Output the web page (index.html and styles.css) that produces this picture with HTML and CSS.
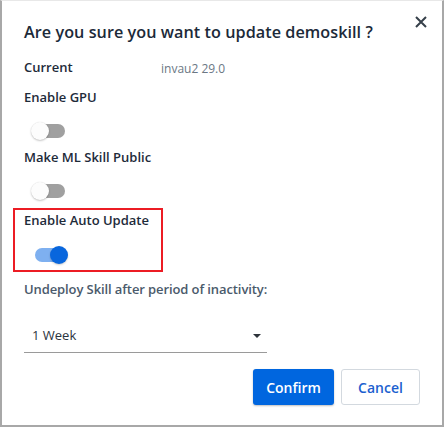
FILE: index.html
```html
<!DOCTYPE html>
<html lang="en">
<head>
<meta charset="utf-8">
<title>Update skill</title>
<link rel="stylesheet" href="styles.css">
</head>
<body>
<div class="dialog">
  <button class="close" aria-label="Close">
    <svg width="12" height="12" viewBox="0 0 12 12"><path d="M1 1L11 11M11 1L1 11" stroke="#36404a" stroke-width="2" fill="none"/></svg>
  </button>
  <h1 class="title">Are you sure you want to update demoskill ?</h1>
  <div class="current">
    <span class="label current-label">Current</span>
    <span class="value">invau2 29.0</span>
  </div>
  <div class="label gap-label">Enable GPU</div>
  <div class="switch-row"><span class="switch"><span class="track"></span><span class="knob"></span></span></div>
  <div class="label">Make ML Skill Public</div>
  <div class="switch-row"><span class="switch"><span class="track"></span><span class="knob"></span></span></div>
  <div class="highlight">
    <div class="label">Enable Auto Update</div>
    <div class="switch-row in-box"><span class="switch on"><span class="track"></span><span class="knob"></span></span></div>
  </div>
  <div class="label muted">Undeploy Skill after period of inactivity:</div>
  <div class="select">
    <span class="select-text">1 Week</span>
    <span class="arrow"></span>
  </div>
  <div class="actions">
    <button class="btn primary">Confirm</button>
    <button class="btn secondary">Cancel</button>
  </div>
</div>
</body>
</html>
```
FILE: styles.css
```css
* { box-sizing: border-box; }
html, body { margin: 0; padding: 0; background: #ffffff; }
body { font-family: "Open Sans", "Liberation Sans", sans-serif; color: #1e2b3a; }
.dialog {
  position: relative;
  width: 444px;
  height: 427px;
  border-left: 2px solid #a8a8a8;
  border-right: 2px solid #a8a8a8;
  border-bottom: 2px solid #a8a8a8;
  border-top: 1px solid #e8e8e8;
  padding: 19px 22px 0 22px;
  display: flex;
  flex-direction: column;
  align-items: flex-start;
}
.close {
  position: absolute;
  top: 14px;
  right: 14px;
  width: 14px;
  height: 14px;
  padding: 0;
  border: none;
  background: transparent;
  display: flex;
  align-items: center;
  justify-content: center;
}
.title {
  margin: 0;
  font-size: 16.2px;
  line-height: 24px;
  font-weight: 600;
  color: #1c2a39;
  letter-spacing: 0.05px;
}
.current {
  margin-top: 13px;
  display: flex;
  align-items: center;
  height: 20px;
}
.label {
  font-size: 13px;
  line-height: 20px;
  font-weight: 600;
  color: #1e2b3a;
}
.current-label { width: 137px; }
.value {
  font-size: 12px;
  color: #6b7784;
  line-height: 20px;
  margin-top: 3px;
}
.gap-label { margin-top: 10px; }
.switch-row {
  padding: 14px 0 6px 7px;
  height: 40px;
}
.switch {
  position: relative;
  display: block;
  width: 37px;
  height: 20px;
}
.track {
  position: absolute;
  left: 4px;
  top: 3px;
  width: 30px;
  height: 14px;
  border-radius: 7px;
  background: #a0a0a0;
}
.knob {
  position: absolute;
  left: 0;
  top: 1px;
  width: 18px;
  height: 18px;
  border-radius: 50%;
  background: #fcfcfc;
  box-shadow: 0 1px 2px rgba(0,0,0,0.22), 0 0 1px rgba(0,0,0,0.12);
}
.switch.on .track { background: #7eb0f0; }
.switch.on .knob { left: 19px; background: #0866dd; box-shadow: 0 1px 2px rgba(0,0,0,0.2); }
.highlight {
  margin-top: 1px;
  margin-left: -11px;
  width: 150px;
  height: 64px;
  border: 2px solid #ec1c24;
  padding: 0 0 0 9px;
}
.switch-row.in-box {
  padding: 15px 0 0 7px;
  height: auto;
}
.muted {
  margin-top: 7px;
  color: #4a5a6b;
  letter-spacing: -0.1px;
}
.select {
  margin-top: 24px;
  width: 243px;
  height: 30px;
  padding: 0 6px 5px 8px;
  border-bottom: 1px solid #9a9a9a;
  display: flex;
  align-items: center;
  justify-content: space-between;
}
.select-text {
  font-size: 13px;
  color: #2b3440;
}
.arrow {
  width: 0;
  height: 0;
  border-left: 4px solid transparent;
  border-right: 4px solid transparent;
  border-top: 4px solid #2d333a;
  margin-top: 1px;
}
.actions {
  margin-top: 16px;
  align-self: stretch;
  display: flex;
  justify-content: flex-end;
  gap: 7px;
}
.btn {
  height: 36px;
  font-family: "Open Sans", "Liberation Sans", sans-serif;
  font-size: 14px;
  font-weight: 600;
  border-radius: 3px;
  padding: 0;
}
.primary {
  width: 81px;
  background: #0066df;
  color: #ffffff;
  border: none;
  box-shadow: 0 1px 2px rgba(0,0,0,0.25);
}
.secondary {
  width: 79px;
  background: #ffffff;
  color: #1b5fcf;
  border: 1px solid #d3d9df;
}
```
